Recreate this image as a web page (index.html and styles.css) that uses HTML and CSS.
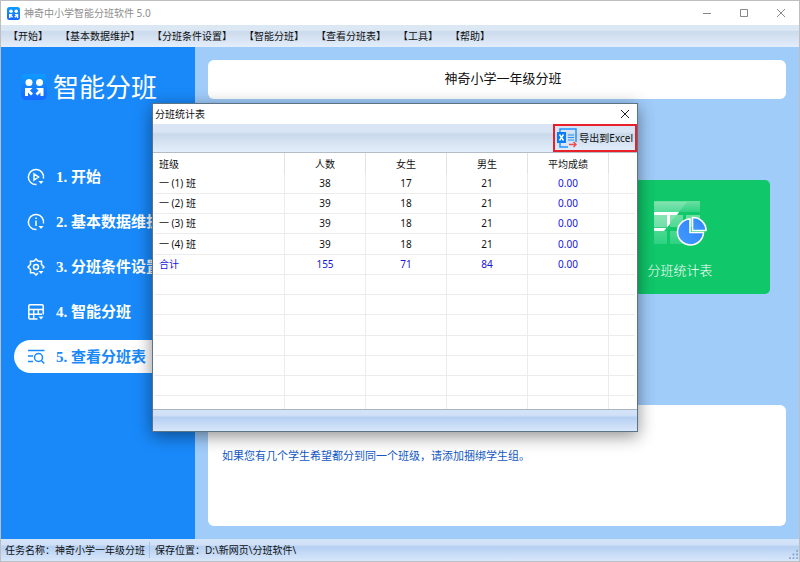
FILE: index.html
```html
<!DOCTYPE html>
<html lang="zh-CN">
<head>
<meta charset="utf-8">
<title>神奇中小学智能分班软件 5.0</title>
<link rel="stylesheet" href="styles.css">
</head>
<body>
<svg class="defs" width="0" height="0" aria-hidden="true">
  <defs>
    <linearGradient id="logoFill" x1="0" y1="0" x2="0" y2="1"><stop offset="0" stop-color="#0f9bff"/><stop offset="1" stop-color="#1668ff"/></linearGradient>
    <symbol id="logo" viewBox="0 0 26 26">
      <rect width="26" height="26" rx="5" fill="url(#logoFill)"/>
      <g fill="#fff"><circle cx="8" cy="8.500" r="3.500"/><circle cx="18.500" cy="8.500" r="3.500"/>
      <path d="M4 14h7.500l-2.500 2.500 3 3-2 2-3-3V22H4zM22.500 14H15l2.500 2.500-3 3 2 2 3-3V22h3z"/></g>
    </symbol>
  </defs>
</svg>
<div class="window">
  <header class="titlebar">
    <svg class="titlebar-logo" aria-hidden="true"><use href="#logo"/></svg>
    <h1 class="titlebar-text">神奇中小学智能分班软件 5.0</h1>
    <div class="window-controls">
      <button type="button" aria-label="最小化"><svg viewBox="0 0 10 10"><path d="M1 5.500h8"/></svg></button>
      <button type="button" aria-label="最大化"><svg viewBox="0 0 10 10"><path d="M1.500 1.500h7v7h-7z"/></svg></button>
      <button type="button" aria-label="关闭"><svg viewBox="0 0 10 10"><path d="M1 1l8 8M9 1L1 9"/></svg></button>
    </div>
  </header>
  <nav class="menubar">
    <button type="button">【开始】</button>
    <button type="button">【基本数据维护】</button>
    <button type="button">【分班条件设置】</button>
    <button type="button">【智能分班】</button>
    <button type="button">【查看分班表】</button>
    <button type="button">【工具】</button>
    <button type="button">【帮助】</button>
  </nav>
  <div class="body">
    <aside class="sidebar">
      <div class="brand"><svg class="brand-logo" aria-hidden="true"><use href="#logo"/></svg><span>智能分班</span></div>
      <nav class="steps">
        <a class="step" href="#"><svg viewBox="0 0 18 18"><path d="M16.400 10.500A7.600 7.600 0 1 0 9.500 16.600M7 6v6l4.500-3z"/><path class="solid" d="M11.500 13h5L14 16z"/></svg>1. 开始</a>
        <a class="step" href="#"><svg viewBox="0 0 18 18"><path d="M16.400 10.500A7.600 7.600 0 1 0 9.500 16.600M9 7.500V13M9 4.500v1.500"/><path class="solid" d="M11.500 13h5L14 16z"/></svg>2. 基本数据维护</a>
        <a class="step" href="#"><svg viewBox="0 0 18 18"><path d="M11 15l-2 2-2.200-2.200H3.500v-3.300L1 9l2.500-2.500V3.300h3.300L9 1l2.200 2.300h3.300v3.200L17 9l-1.500 1.500"/><circle cx="9" cy="9" r="2.500"/><path class="solid" d="M11.500 13h5L14 16z"/></svg>3. 分班条件设置</a>
        <a class="step" href="#"><svg viewBox="0 0 18 18"><path d="M10.500 16H3a1.200 1.200 0 0 1-1.200-1.200V3A1.200 1.200 0 0 1 3 1.800h12A1.200 1.200 0 0 1 16.200 3v8.500M2 6.500h14M2 11.300h13M6.700 6.500V16M11.300 6.500v5"/><path class="solid" d="M11.500 13.500h5L14 16.500z"/></svg>4. 智能分班</a>
        <a class="step step-active" href="#"><svg viewBox="0 0 18 18"><path d="M1 2.500h16.500M1 8h5M1 13.500h5"/><circle cx="11.500" cy="9.500" r="4"/><path d="M14.300 12.500l3 3"/></svg>5. 查看分班表</a>
      </nav>
    </aside>
    <main class="main">
      <section class="card task-card">神奇小学一年级分班</section>
      <section class="tiles">
        <button type="button" class="tile">
          <svg class="tile-icon" viewBox="0 0 54 46" aria-hidden="true">
            <defs>
              <linearGradient id="cell" x1="0" y1="0" x2="0" y2="1"><stop offset="0" stop-color="#6bdfa1"/><stop offset="1" stop-color="#2ed283"/></linearGradient>
              <linearGradient id="pie" x1="1" y1="0" x2="0" y2="1"><stop offset="0" stop-color="#2a80f8"/><stop offset="1" stop-color="#459bff"/></linearGradient>
            </defs>
            <rect x="1" y="1" width="46" height="11" rx="1" fill="url(#cell)"/>
            <path d="M1 15h13v12H1zM17 15h13v12H17zM33 15h14v12H33zM1 31h13v13H1zM17 31h13v13H17z" fill="url(#cell)"/>
            <path d="M1 2h33L22 17 10 31H1z" fill="#fff" opacity=".18"/>
            <path d="M1 12h25l-2 3h-7v9l-6 7H1v-3h13V15H1z" fill="#fff"/>
            <path d="M37 19A13 13 0 1 0 50.500 32.500H37z" fill="url(#pie)" stroke="#fff" stroke-width="1.600"/>
            <path d="M39.500 17.500A13 13 0 0 1 53 30.500H39.500z" fill="url(#pie)" stroke="#fff" stroke-width="1.600"/>
          </svg>
          <span>分班统计表</span>
        </button>
      </section>
      <section class="card tips-card"><p>如果您有几个学生希望都分到同一个班级，请添加捆绑学生组。</p></section>
    </main>
  </div>
  <footer class="statusbar">
    <span class="status-item">任务名称：神奇小学一年级分班</span>
    <span class="status-item">保存位置：D:\新网页\分班软件\</span>
    <svg class="grip" viewBox="0 0 10 10" aria-hidden="true"><path d="M8 0h2v2H8zM4 4h2v2H4zM8 4h2v2H8zM0 8h2v2H0zM4 8h2v2H4zM8 8h2v2H8z"/></svg>
  </footer>

  <div class="dialog" role="dialog" aria-labelledby="dialog-title">
    <div class="dialog-title">
      <h2 id="dialog-title">分班统计表</h2>
      <button type="button" aria-label="关闭"><svg viewBox="0 0 10 10"><path d="M1 1l8 8M9 1L1 9"/></svg></button>
    </div>
    <div class="toolbar">
      <button type="button" class="export">
        <svg viewBox="0 0 20 20" aria-hidden="true">
          <path d="M3 5V1h16v13M3 14v5h8" fill="none" stroke="#2492ff" stroke-width="1.500"/>
          <path d="M0 4h9v11H0z" fill="#087cfa"/>
          <path d="M2.500 6.500l4 6M6.500 6.500l-4 6" fill="none" stroke="#fff" stroke-width="1.400"/>
          <path d="M11 7h6M11 9.500h6M11 12h6" fill="none" stroke="#2492ff" stroke-width="1.200"/>
          <path d="M12 16.500h7M16.500 14l2.500 2.500-2.500 2.500" fill="none" stroke="#f4484d" stroke-width="1.400"/>
        </svg>
        导出到Excel
      </button>
    </div>
    <div class="table-area">
      <table>
        <colgroup><col class="col-class"><col class="col-num"><col class="col-num"><col class="col-num"><col class="col-num"><col></colgroup>
        <thead><tr><th>班级</th><th>人数</th><th>女生</th><th>男生</th><th>平均成绩</th><th></th></tr></thead>
        <tbody>
          <tr><td>一 (1) 班</td><td>38</td><td>17</td><td>21</td><td class="score">0.00</td><td></td></tr>
          <tr><td>一 (2) 班</td><td>39</td><td>18</td><td>21</td><td class="score">0.00</td><td></td></tr>
          <tr><td>一 (3) 班</td><td>39</td><td>18</td><td>21</td><td class="score">0.00</td><td></td></tr>
          <tr><td>一 (4) 班</td><td>39</td><td>18</td><td>21</td><td class="score">0.00</td><td></td></tr>
          <tr class="total"><td>合计</td><td>155</td><td>71</td><td>84</td><td>0.00</td><td></td></tr>
          <tr><td></td><td></td><td></td><td></td><td></td><td></td></tr>
          <tr><td></td><td></td><td></td><td></td><td></td><td></td></tr>
          <tr><td></td><td></td><td></td><td></td><td></td><td></td></tr>
          <tr><td></td><td></td><td></td><td></td><td></td><td></td></tr>
          <tr><td></td><td></td><td></td><td></td><td></td><td></td></tr>
          <tr><td></td><td></td><td></td><td></td><td></td><td></td></tr>
          <tr class="tail"><td></td><td></td><td></td><td></td><td></td><td></td></tr>
        </tbody>
      </table>
    </div>
    <div class="dialog-foot"></div>
  </div>
</div>
</body>
</html>
```
FILE: styles.css
```css
* { box-sizing: border-box; }

body {
  margin: 0;
  color: #111;
  font: 10px/16px "Noto Sans", "Noto Sans CJK SC", sans-serif;
}

h1, h2, p { margin: 0; font: inherit; }

button {
  padding: 0;
  border: 0;
  background: none;
  color: inherit;
  font: inherit;
}

.defs { position: absolute; }

.window {
  position: relative;
  display: flex;
  flex-direction: column;
  min-height: 100vh;
  border: 1px solid #bcbec0;
  background: #fff;
}

/* Title bar */
.titlebar {
  display: flex;
  align-items: center;
  height: 24px;
  padding: 0 13px 0 6px;
  color: #8e8e8e;
}
.titlebar-logo { width: 13px; height: 13px; margin-right: 4px; }
.window-controls { display: flex; gap: 27px; margin-left: auto; }
.window-controls button { width: 10px; height: 10px; }
.window-controls svg { display: block; fill: none; stroke: #888; }

/* Menu bar */
.menubar {
  display: flex;
  align-items: center;
  gap: 12px;
  height: 22px;
  padding-left: 7px;
  background: linear-gradient(#dce7f4 0, #dce7f4 24%, #cbdaec 30%, #e4eefb 100%);
}
.menubar button { white-space: nowrap; }

/* Body */
.body { display: flex; flex: 1; background: #a0ccfa; }

.sidebar {
  flex: none;
  width: 194px;
  padding-top: 24px;
  background: #1989fa;
  color: #fff;
}
.brand {
  display: flex;
  align-items: center;
  gap: 6px;
  height: 32px;
  padding-left: 20px;
  font-size: 26px;
  font-weight: 400;
  line-height: 32px;
}
.brand-logo { width: 26px; height: 26px; }

.steps {
  display: flex;
  flex-direction: column;
  gap: 12px;
  margin-top: 57px;
  padding-left: 13px;
}
.step {
  display: flex;
  align-items: center;
  gap: 11px;
  height: 33px;
  padding-left: 13px;
  border-radius: 17px 0 0 17px;
  color: #fff;
  font: bold 15px/20px "Liberation Serif", "Noto Sans CJK SC", serif;
  text-decoration: none;
  white-space: nowrap;
}
.step svg {
  flex: none;
  width: 18px;
  height: 18px;
  fill: none;
  stroke: currentColor;
  stroke-width: 1.5;
}
.step .solid { fill: currentColor; stroke: none; }
.step-active { background: #fff; color: #1989fa; }

.main {
  display: flex;
  flex: 1;
  flex-direction: column;
  padding: 13px;
}
.card { border-radius: 6px; background: #fff; }
.task-card {
  margin-bottom: 81px;
  padding: 8px 0 11px 12px;
  font-size: 13px;
  line-height: 20px;
  text-align: center;
}
.tiles { display: flex; justify-content: flex-end; padding-right: 16px; }
.tile {
  display: flex;
  flex-direction: column;
  align-items: center;
  gap: 14px;
  width: 180px;
  height: 114px;
  padding-top: 20px;
  border-radius: 5px;
  background: #10c76a;
  color: #fff;
  font-size: 13px;
  font-weight: 300;
  line-height: 20px;
}
.tile-icon { width: 54px; height: 46px; }
.tips-card {
  flex: 1;
  margin-top: 111px;
  padding: 43px 14px;
  color: #1257c4;
  font-size: 11px;
}

/* Status bar */
.statusbar {
  display: flex;
  align-items: center;
  height: 22px;
  padding: 0 1px 0 4px;
  background: linear-gradient(#d3e3f8 0, #d0e1f7 25%, #b5d0f3 35%, #d8e7fa 100%);
}
.status-item + .status-item {
  margin-left: 4px;
  padding-left: 5px;
  border-left: 1px solid #a5c2e6;
}
.grip { width: 9px; height: 9px; margin: 9px 0 0 auto; fill: #83a5d6; }

/* Statistics dialog, floating over the window */
.dialog {
  position: absolute;
  top: 102px;
  right: 161px;
  left: 151px;
  border: 1px solid #5c7287;
  background: #fff;
  box-shadow: 0 4px 16px rgba(0, 0, 0, .45);
}
.dialog-title {
  display: flex;
  align-items: center;
  justify-content: space-between;
  height: 20px;
  padding: 0 7px 0 2px;
}
.dialog-title button { width: 10px; height: 10px; }
.dialog-title svg { display: block; fill: none; stroke: #222; }
.toolbar {
  display: flex;
  justify-content: flex-end;
  height: 28px;
  background: linear-gradient(#d9e5f4 0, #d9e5f4 28%, #c9d9ea 36%, #e3eefb 100%);
}
.export {
  display: flex;
  align-items: center;
  gap: 2px;
  padding: 0 2px;
  border: 2px solid #e8202a;
  white-space: nowrap;
}
.export svg { width: 20px; height: 20px; }

.table-area { padding: 0 2px 0 1px; border-top: 1px solid #b4bcc8; }
table { width: 100%; border-collapse: separate; border-spacing: 0; table-layout: fixed; }
.col-class { width: 131px; }
.col-num { width: 81px; }
th, td {
  height: 20px;
  padding: 0;
  border-right: 1px solid #ececec;
  font-weight: 400;
  line-height: 16px;
  text-align: center;
}
th { height: 21px; border-right-color: #e2e2e2; }
td { padding-bottom: 1px; border-bottom: 1px solid #ececec; }
tr:nth-child(4n) td { height: 21px; }
th:first-child, td:first-child { padding-left: 5px; text-align: left; }
th:last-child, td:last-child { border-right: 0; }
.score, .total { color: #1414e0; }
tbody .tail td { height: 13px; border-bottom: 0; }

.dialog-foot {
  height: 22px;
  border-top: 1px solid #a9b2bf;
  background: linear-gradient(#d3e3f8 0, #d0e1f7 25%, #b5d0f3 35%, #d8e7fa 100%);
}
```
